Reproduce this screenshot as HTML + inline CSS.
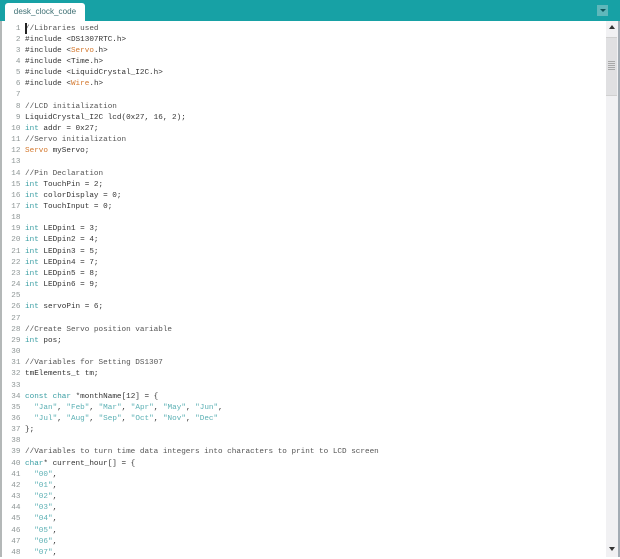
<!DOCTYPE html>
<html><head><meta charset="utf-8">
<style>
html,body{margin:0;padding:0;width:620px;height:557px;overflow:hidden;background:#fff}
#top{position:absolute;left:0;top:0;width:620px;height:21px;background:#17a1a5}
#left{position:absolute;left:0;top:21px;width:2px;height:536px;background:#b4b8b8}
#tab{position:absolute;left:5px;top:3px;width:80px;height:18px;background:#fff;border-radius:3px 3px 0 0;font:8.1px/17.5px "Liberation Sans",sans-serif;color:#3d6f73;text-align:center;letter-spacing:.02px}
#menu{position:absolute;left:597px;top:5px;width:11px;height:11px;background:#5fb8bb}
#menu:after{content:"";position:absolute;left:2.5px;top:4px;border:3px solid transparent;border-top:3px solid #0d5559;border-bottom:0}
#nums{position:absolute;left:0;top:23.5px;width:20.5px;text-align:right;font:7.66px/11.15px "Liberation Mono",monospace;color:#8d9595;white-space:pre}
#code{position:absolute;left:25px;top:23.5px;font:7.66px/11.15px "Liberation Mono",monospace;color:#333;white-space:pre}
.k{color:#3a9ea3}.o{color:#d3772c}.c{color:#555}.s{color:#5bb0b4}
#caret{position:absolute;left:25px;top:23px;width:1.5px;height:11px;background:#222}
#track{position:absolute;left:606px;top:21px;width:12px;height:536px;background:#f1f1f3}
#edge{position:absolute;left:618px;top:21px;width:2px;height:536px;background:#a3acb4}
#thumb{position:absolute;left:606px;top:37px;width:11px;height:59px;background:#e0e0e2;border-top:1px solid #d0d0d0;border-bottom:1px solid #d0d0d0;box-sizing:border-box}
#grip{position:absolute;left:608px;top:61px;width:7px;height:9px;background:repeating-linear-gradient(#a8a8a8 0 1px,#e0e0e2 1px 2px)}
.up,.dn{position:absolute;left:608.5px;border:3.5px solid transparent}
.up{top:25px;border-bottom:4px solid #333;border-top:0}
.dn{top:547px;border-top:4px solid #333;border-bottom:0}
</style></head><body>
<div id="top"></div>
<div id="left"></div>
<div id="tab">desk_clock_code</div>
<div id="menu"></div>
<div id="nums">1
2
3
4
5
6
7
8
9
10
11
12
13
14
15
16
17
18
19
20
21
22
23
24
25
26
27
28
29
30
31
32
33
34
35
36
37
38
39
40
41
42
43
44
45
46
47
48</div>
<div id="code"><span class="c">//Libraries used</span>
#include &lt;DS1307RTC.h&gt;
#include &lt;<span class="o">Servo</span>.h&gt;
#include &lt;Time.h&gt;
#include &lt;LiquidCrystal_I2C.h&gt;
#include &lt;<span class="o">Wire</span>.h&gt;

<span class="c">//LCD initialization</span>
LiquidCrystal_I2C lcd(0x27, 16, 2);
<span class="k">int</span> addr = 0x27;
<span class="c">//Servo initialization</span>
<span class="o">Servo</span> myServo;

<span class="c">//Pin Declaration</span>
<span class="k">int</span> TouchPin = 2;
<span class="k">int</span> colorDisplay = 0;
<span class="k">int</span> TouchInput = 0;

<span class="k">int</span> LEDpin1 = 3;
<span class="k">int</span> LEDpin2 = 4;
<span class="k">int</span> LEDpin3 = 5;
<span class="k">int</span> LEDpin4 = 7;
<span class="k">int</span> LEDpin5 = 8;
<span class="k">int</span> LEDpin6 = 9;

<span class="k">int</span> servoPin = 6;

<span class="c">//Create Servo position variable</span>
<span class="k">int</span> pos;

<span class="c">//Variables for Setting DS1307</span>
tmElements_t tm;

<span class="k">const</span> <span class="k">char</span> *monthName[12] = {
  <span class="s">"Jan"</span>, <span class="s">"Feb"</span>, <span class="s">"Mar"</span>, <span class="s">"Apr"</span>, <span class="s">"May"</span>, <span class="s">"Jun"</span>,
  <span class="s">"Jul"</span>, <span class="s">"Aug"</span>, <span class="s">"Sep"</span>, <span class="s">"Oct"</span>, <span class="s">"Nov"</span>, <span class="s">"Dec"</span>
};

<span class="c">//Variables to turn time data integers into characters to print to LCD screen</span>
<span class="k">char</span>* current_hour[] = {
  <span class="s">"00"</span>,
  <span class="s">"01"</span>,
  <span class="s">"02"</span>,
  <span class="s">"03"</span>,
  <span class="s">"04"</span>,
  <span class="s">"05"</span>,
  <span class="s">"06"</span>,
  <span class="s">"07"</span>,</div>
<div id="caret"></div>
<div id="track"></div>
<div id="edge"></div>
<div class="up"></div>
<div id="thumb"></div>
<div id="grip"></div>
<div class="dn"></div>
</body></html>
